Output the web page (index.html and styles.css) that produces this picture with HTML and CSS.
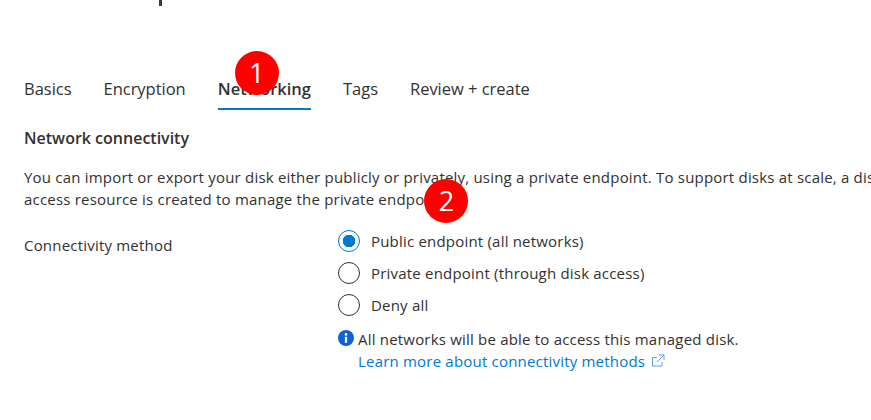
FILE: index.html
```html
<!DOCTYPE html>
<html lang="en">
<head>
<meta charset="utf-8">
<title>Networking</title>
<link rel="stylesheet" href="styles.css">
</head>
<body>
<div class="page">
  <div class="title-stub"></div>
  <nav class="tabs">
    <a class="tab">Basics</a>
    <a class="tab">Encryption</a>
    <a class="tab active">Networking<span class="badge badge-one">1</span></a>
    <a class="tab">Tags</a>
    <a class="tab">Review + create</a>
  </nav>
  <h2 class="heading">Network connectivity</h2>
  <p class="desc">You can import or export your disk either publicly or privately, using a private endpoint. To support disks at scale, a disk<br>access resource is created to manage the private endpo<span class="anchor"><span class="badge badge-two">2</span></span></p>
  <div class="field">
    <div class="field-label">Connectivity method</div>
    <div class="field-control">
      <label class="radio"><span class="circle checked"></span>Public endpoint (all networks)</label>
      <label class="radio"><span class="circle"></span>Private endpoint (through disk access)</label>
      <label class="radio"><span class="circle"></span>Deny all</label>
      <div class="info">
        <svg class="info-icon" viewBox="0 0 16 16" width="16" height="16" aria-hidden="true"><circle cx="8" cy="8" r="8" fill="#0f62d6"/><circle cx="8" cy="4.4" r="1.3" fill="#fff"/><rect x="6.9" y="6.8" width="2.2" height="6" fill="#fff"/></svg>
        <div class="info-text">
          <div>All networks will be able to access this managed disk.</div>
          <a class="link">Learn more about connectivity methods<svg class="ext" viewBox="0 0 14 14" width="14" height="14" aria-hidden="true"><path d="M11 8v4H1.5V3.5H6M8 1h5v5M13 1L6 8" fill="none" stroke="#5a9fe0" stroke-width="1"/></svg></a>
        </div>
      </div>
    </div>
  </div>
</div>
</body>
</html>
```
FILE: styles.css
```css
* { box-sizing: border-box; }
html, body { margin: 0; padding: 0; background: #fff; overflow: hidden; }
body { width: 871px; height: 420px; font-family: "Open Sans", "Noto Sans", sans-serif; color: #323130; }
.page { padding-left: 24px; }
.title-stub { width: 3px; height: 6px; margin-left: 135px; background: #3b3a39; }
.tabs { display: flex; gap: 32px; margin-top: 66px; height: 38px; }
.tab { position: relative; font-size: 16.5px; line-height: 34px; height: 38px; white-space: nowrap; letter-spacing: -0.02px; }
.tab.active { font-weight: 600; border-bottom: 2px solid #0078d4; height: 38px; letter-spacing: 0; }
.badge { position: absolute; width: 44px; height: 44px; border-radius: 50%; background: #f00; color: #fff; font-size: 27px; line-height: 44px; text-align: center; font-weight: 400; letter-spacing: 0; }
.badge-one { left: 17px; top: -21px; }
.anchor { position: relative; }
.badge-two { left: 0; top: -10px; }
.heading { margin: 17px 0 0; font-size: 16px; line-height: 22px; font-weight: 600; letter-spacing: 0; }
.desc { margin: 17px 0 0; font-size: 15px; line-height: 22px; white-space: nowrap; letter-spacing: 0.2px; }
.field { display: flex; margin-top: 15px; }
.field-label { width: 314px; font-size: 15px; line-height: 20px; padding-top: 10px; letter-spacing: 0.2px; }
.field-control { display: flex; flex-direction: column; }
.radio { display: flex; align-items: center; gap: 11px; height: 32px; font-size: 15px; letter-spacing: 0.2px; }
.circle { width: 22px; height: 22px; border-radius: 50%; border: 1.5px solid #323130; background: #fff; display: block; }
.circle.checked { border-color: #0078d4; background: radial-gradient(circle, #0078d4 0 6px, #fff 6.5px); }
.info { display: flex; gap: 4px; margin-top: 7px; font-size: 15px; line-height: 22px; letter-spacing: 0.2px; }
.info-icon { margin-top: 2px; flex: none; }
.link { color: #0078d4; display: flex; align-items: center; gap: 6px; }
```
